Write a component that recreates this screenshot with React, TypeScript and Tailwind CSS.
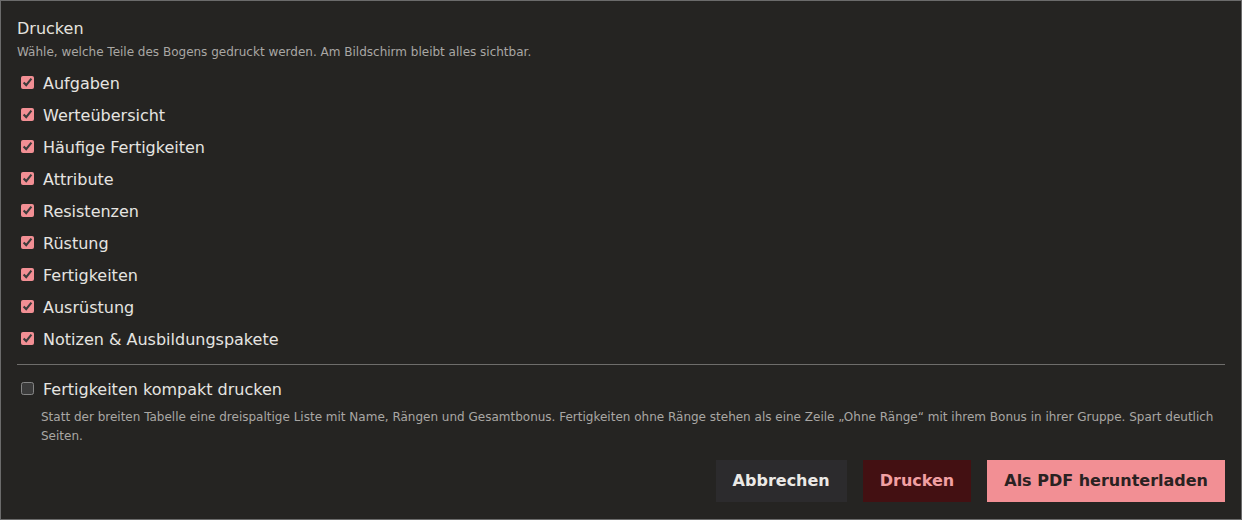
import { useState } from "react";

const sections = [
  "Aufgaben",
  "Werteübersicht",
  "Häufige Fertigkeiten",
  "Attribute",
  "Resistenzen",
  "Rüstung",
  "Fertigkeiten",
  "Ausrüstung",
  "Notizen & Ausbildungspakete",
];

export default function App() {
  const [checked, setChecked] = useState<{ [key: string]: boolean }>(
    Object.fromEntries(sections.map((s) => [s, true]))
  );
  const [compact, setCompact] = useState(false);

  return (
    <div
      className="h-[520px] w-[1242px] border border-[#6b6b6b] bg-[#252422] px-4 pb-4 pt-4 text-[#e6e4e1] [color-scheme:dark]"
      style={{ fontFamily: '"DejaVu Sans", sans-serif' }}
    >
      <h2 className="text-[16px] leading-[24px] text-[#e4e2df]">Drucken</h2>
      <p className="mt-0.5 text-[12px] leading-[18px] text-[#a9a7a4]">
        Wähle, welche Teile des Bogens gedruckt werden. Am Bildschirm bleibt alles sichtbar.
      </p>

      <div className="mt-[7px] flex flex-col">
        {sections.map((s) => (
          <label key={s} className="flex h-8 cursor-pointer items-center">
            <input
              type="checkbox"
              checked={checked[s]}
              onChange={() => setChecked({ ...checked, [s]: !checked[s] })}
              className="mb-[3px] ml-1 mr-[9px] h-[13px] w-[13px] accent-[#f28f94]"
            />
            <span className="text-[16px] leading-[24px]">{s}</span>
          </label>
        ))}
      </div>

      <div className="mt-2 h-px bg-[#6e6d6b]" />

      <label className="mt-[9px] flex h-8 cursor-pointer items-center">
        <input
          type="checkbox"
          checked={compact}
          onChange={() => setCompact(!compact)}
          className="mb-[3px] ml-1 mr-[9px] h-[13px] w-[13px] accent-[#f28f94]"
        />
        <span className="text-[16px] leading-[24px]">Fertigkeiten kompakt drucken</span>
      </label>
      <p className="mt-[2px] pl-6 text-[12px] leading-[19px] text-[#a9a7a4]">
        Statt der breiten Tabelle eine dreispaltige Liste mit Name, Rängen und Gesamtbonus. Fertigkeiten ohne Ränge stehen als eine Zeile „Ohne Ränge“ mit ihrem Bonus in ihrer Gruppe. Spart deutlich Seiten.
      </p>

      <div className="mt-[14px] flex justify-end gap-4">
        <button className="h-[42px] bg-[#2c2b2d] px-[17px] text-[16px] font-bold text-[#ebe9e6]">
          Abbrechen
        </button>
        <button className="h-[42px] bg-[#431012] px-[17px] text-[16px] font-bold text-[#f2a0a3]">
          Drucken
        </button>
        <button className="h-[42px] bg-[#f28f94] px-[17px] text-[16px] font-bold text-[#2a2222]">
          Als PDF herunterladen
        </button>
      </div>
    </div>
  );
}
